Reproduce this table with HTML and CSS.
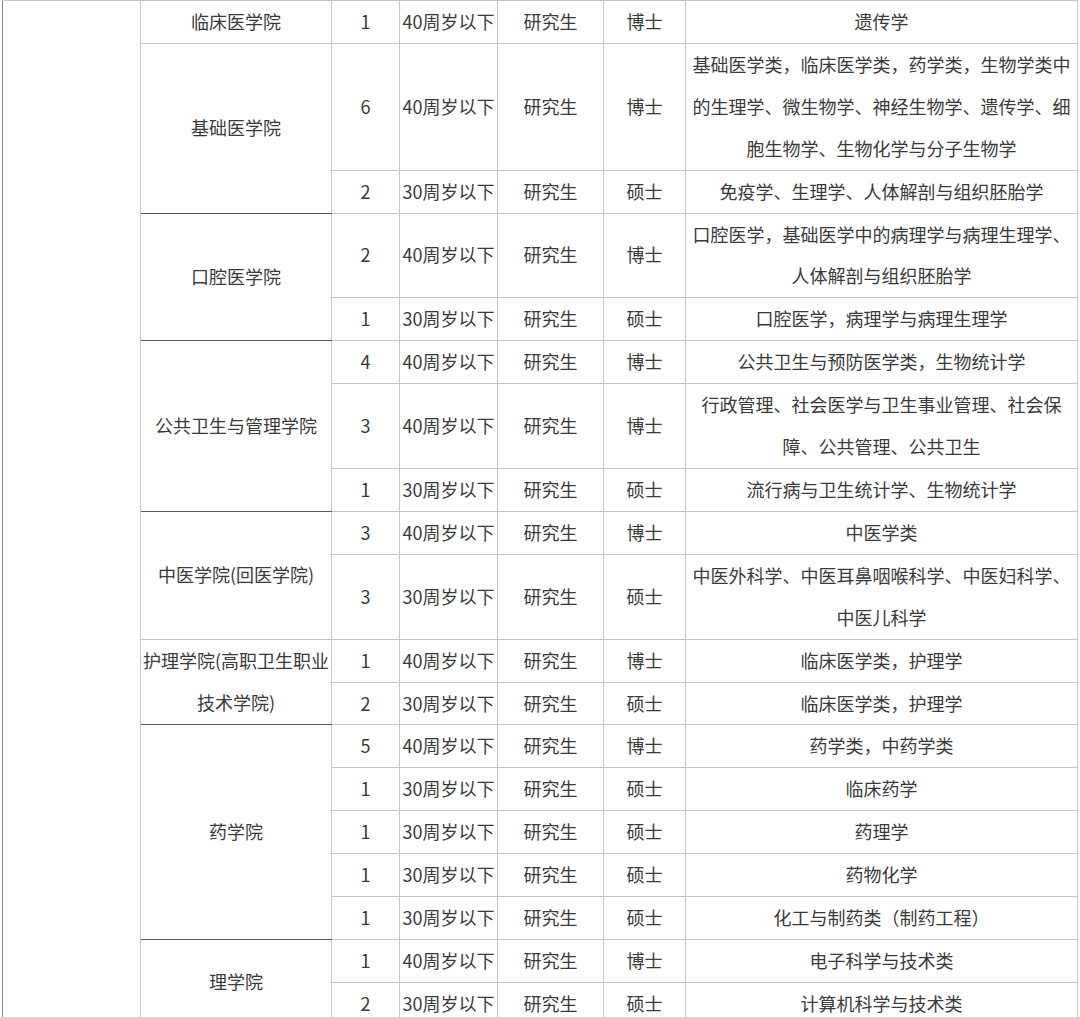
FILE: index.html
```html
<!DOCTYPE html>
<html lang="zh-CN">
<head>
<meta charset="utf-8">
<title>招聘岗位表</title>
<link rel="stylesheet" href="styles.css">
</head>
<body>
<table class="jobs">
  <colgroup>
    <col class="w0"><col class="w1"><col class="w2"><col class="w3"><col class="w4"><col class="w5"><col class="w6">
  </colgroup>
  <tbody>
    <tr>
      <td class="lead" rowspan="19"></td>
      <td class="col">临床医学院</td><td>1</td><td>40周岁以下</td><td>研究生</td><td>博士</td><td class="major">遗传学</td>
    </tr>
    <tr>
      <td class="col dark" rowspan="2">基础医学院</td><td>6</td><td>40周岁以下</td><td>研究生</td><td>博士</td><td class="major">基础医学类，临床医学类，药学类，生物学类中的生理学、微生物学、神经生物学、遗传学、细胞生物学、生物化学与分子生物学</td>
    </tr>
    <tr>
      <td>2</td><td>30周岁以下</td><td>研究生</td><td>硕士</td><td class="major">免疫学、生理学、人体解剖与组织胚胎学</td>
    </tr>
    <tr>
      <td class="col dark" rowspan="2">口腔医学院</td><td>2</td><td>40周岁以下</td><td>研究生</td><td>博士</td><td class="major">口腔医学，基础医学中的病理学与病理生理学、人体解剖与组织胚胎学</td>
    </tr>
    <tr>
      <td>1</td><td>30周岁以下</td><td>研究生</td><td>硕士</td><td class="major">口腔医学，病理学与病理生理学</td>
    </tr>
    <tr>
      <td class="col dark" rowspan="3">公共卫生与管理学院</td><td>4</td><td>40周岁以下</td><td>研究生</td><td>博士</td><td class="major">公共卫生与预防医学类，生物统计学</td>
    </tr>
    <tr>
      <td>3</td><td>40周岁以下</td><td>研究生</td><td>博士</td><td class="major">行政管理、社会医学与卫生事业管理、社会保障、公共管理、公共卫生</td>
    </tr>
    <tr>
      <td>1</td><td>30周岁以下</td><td>研究生</td><td>硕士</td><td class="major">流行病与卫生统计学、生物统计学</td>
    </tr>
    <tr>
      <td class="col" rowspan="2">中医学院(回医学院)</td><td>3</td><td>40周岁以下</td><td>研究生</td><td>博士</td><td class="major">中医学类</td>
    </tr>
    <tr>
      <td>3</td><td>30周岁以下</td><td>研究生</td><td>硕士</td><td class="major">中医外科学、中医耳鼻咽喉科学、中医妇科学、中医儿科学</td>
    </tr>
    <tr>
      <td class="col dark" rowspan="2">护理学院(高职卫生职业技术学院)</td><td>1</td><td>40周岁以下</td><td>研究生</td><td>博士</td><td class="major">临床医学类，护理学</td>
    </tr>
    <tr>
      <td>2</td><td>30周岁以下</td><td>研究生</td><td>硕士</td><td class="major">临床医学类，护理学</td>
    </tr>
    <tr>
      <td class="col dark" rowspan="5">药学院</td><td>5</td><td>40周岁以下</td><td>研究生</td><td>博士</td><td class="major">药学类，中药学类</td>
    </tr>
    <tr>
      <td>1</td><td>30周岁以下</td><td>研究生</td><td>硕士</td><td class="major">临床药学</td>
    </tr>
    <tr>
      <td>1</td><td>30周岁以下</td><td>研究生</td><td>硕士</td><td class="major">药理学</td>
    </tr>
    <tr>
      <td>1</td><td>30周岁以下</td><td>研究生</td><td>硕士</td><td class="major">药物化学</td>
    </tr>
    <tr>
      <td>1</td><td>30周岁以下</td><td>研究生</td><td>硕士</td><td class="major">化工与制药类（制药工程）</td>
    </tr>
    <tr>
      <td class="col" rowspan="2">理学院</td><td>1</td><td>40周岁以下</td><td>研究生</td><td>博士</td><td class="major">电子科学与技术类</td>
    </tr>
    <tr>
      <td>2</td><td>30周岁以下</td><td>研究生</td><td>硕士</td><td class="major">计算机科学与技术类</td>
    </tr>
  </tbody>
</table>
</body>
</html>
```

FILE: styles.css
```css
html, body {
  margin: 0;
  padding: 0;
  background: #ffffff;
}

body {
  font-family: "Noto Sans CJK SC", "Noto Sans", sans-serif;
  color: #3a3a3a;
}

.jobs {
  border-collapse: collapse;
  table-layout: fixed;
  width: 1076px;
  margin-left: 2px;
  font-size: 18px;
  line-height: 41.9px;
}

.w0 { width: 138px; }
.w1 { width: 191px; }
.w2 { width: 68px; }
.w3 { width: 98px; }
.w4 { width: 106px; }
.w5 { width: 82px; }
.w6 { width: 392px; }

.jobs td {
  border: 1px solid #c6c6c6;
  padding: 0 2px;
  text-align: center;
  vertical-align: middle;
  white-space: normal;
  word-break: normal;
}

.jobs td.lead {
  border-left: 1px solid #8c8c8c;
}

.jobs td.col {
  padding: 0;
}

.jobs td.col.dark {
  border-bottom: 1px solid #5a5a5a;
}

.jobs td.major {
  padding: 0 5px;
}
```
